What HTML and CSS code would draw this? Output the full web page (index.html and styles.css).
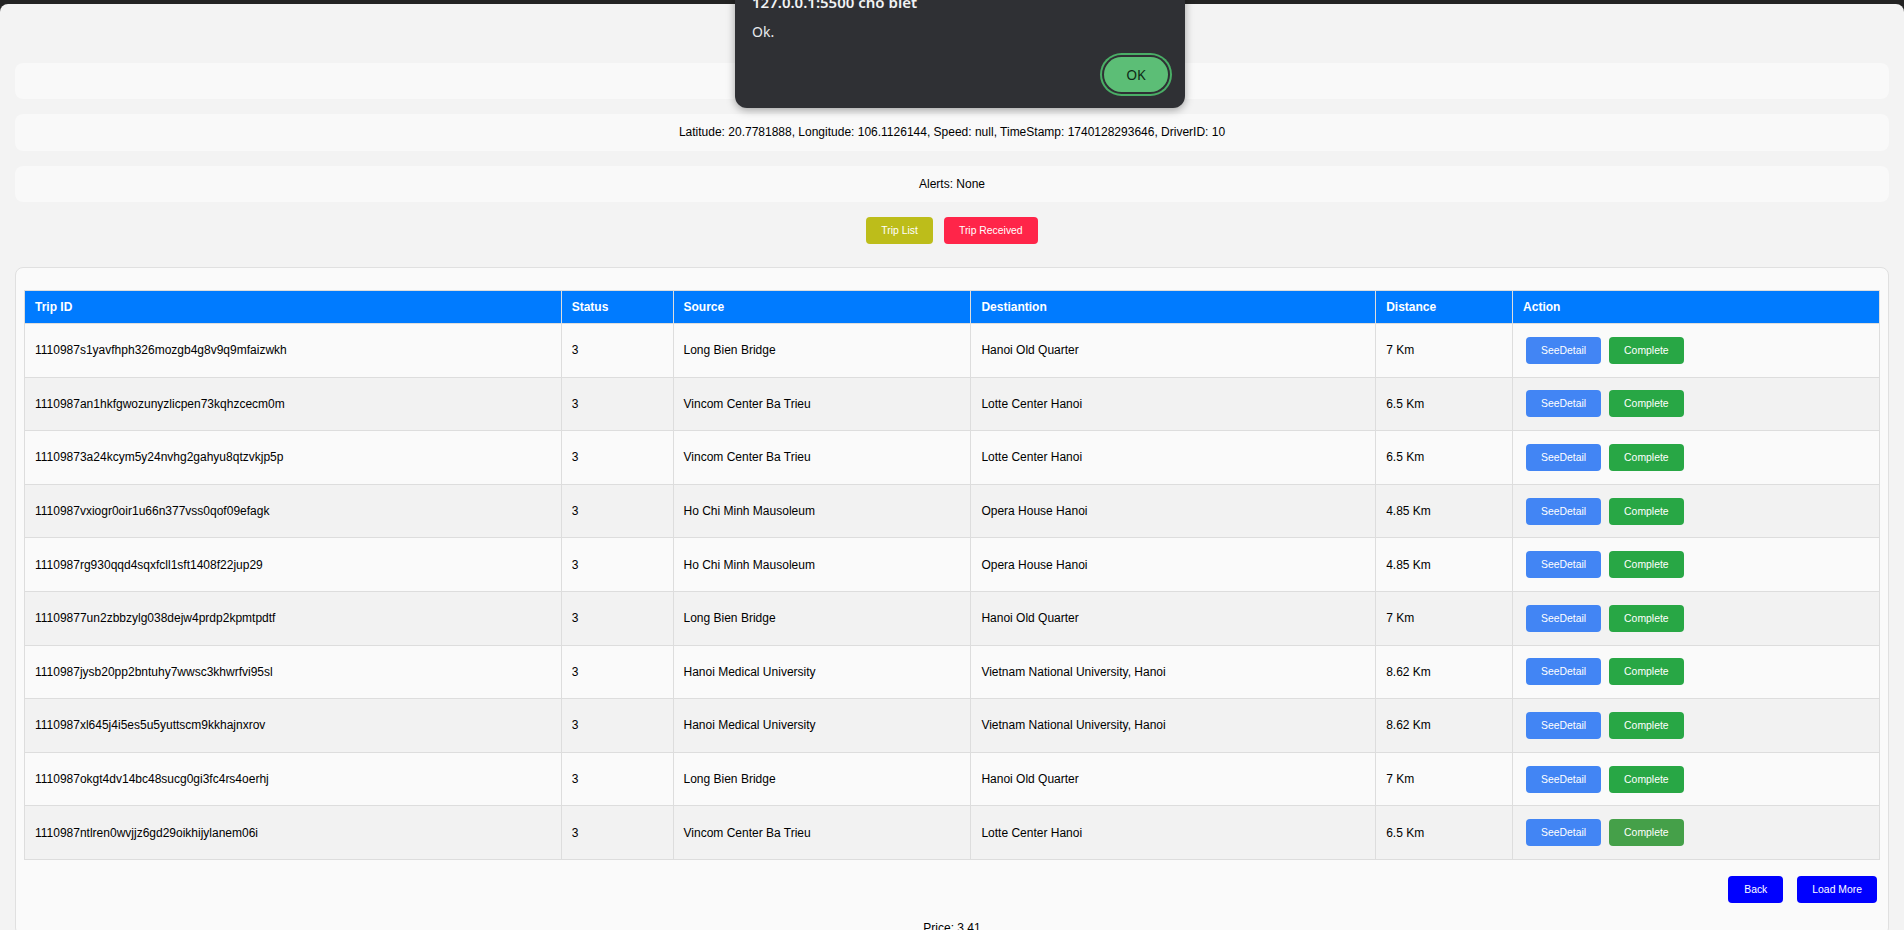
FILE: index.html
```html
<!DOCTYPE html>
<html lang="vi">
<head>
<meta charset="utf-8">
<title>Driver Trips</title>
<link rel="stylesheet" href="styles.css">
</head>
<body>
<div class="viewport">
  <main class="page">
    <div class="info-box"></div>
    <div class="info-box info-tall">Latitude: 20.7781888, Longitude: 106.1126144, Speed: null, TimeStamp: 1740128293646, DriverID: 10</div>
    <div class="info-box">Alerts: None</div>
    <div class="tabs">
      <button class="btn btn-olive">Trip List</button>
      <button class="btn btn-red">Trip Received</button>
    </div>
    <section class="card">
      <table class="trips">
        <colgroup>
          <col class="w-id"><col class="w-status"><col class="w-src"><col class="w-dst"><col class="w-dist"><col class="w-act">
        </colgroup>
        <thead>
          <tr><th>Trip ID</th><th>Status</th><th>Source</th><th>Destiantion</th><th>Distance</th><th>Action</th></tr>
        </thead>
        <tbody>
          <tr><td>1110987s1yavfhph326mozgb4g8v9q9mfaizwkh</td><td>3</td><td>Long Bien Bridge</td><td>Hanoi Old Quarter</td><td>7 Km</td><td><div class="actions"><button class="btn btn-see">SeeDetail</button><button class="btn btn-done">Complete</button></div></td></tr>
          <tr><td>1110987an1hkfgwozunyzlicpen73kqhzcecm0m</td><td>3</td><td>Vincom Center Ba Trieu</td><td>Lotte Center Hanoi</td><td>6.5 Km</td><td><div class="actions"><button class="btn btn-see">SeeDetail</button><button class="btn btn-done">Complete</button></div></td></tr>
          <tr><td>11109873a24kcym5y24nvhg2gahyu8qtzvkjp5p</td><td>3</td><td>Vincom Center Ba Trieu</td><td>Lotte Center Hanoi</td><td>6.5 Km</td><td><div class="actions"><button class="btn btn-see">SeeDetail</button><button class="btn btn-done">Complete</button></div></td></tr>
          <tr><td>1110987vxiogr0oir1u66n377vss0qof09efagk</td><td>3</td><td>Ho Chi Minh Mausoleum</td><td>Opera House Hanoi</td><td>4.85 Km</td><td><div class="actions"><button class="btn btn-see">SeeDetail</button><button class="btn btn-done">Complete</button></div></td></tr>
          <tr><td>1110987rg930qqd4sqxfcll1sft1408f22jup29</td><td>3</td><td>Ho Chi Minh Mausoleum</td><td>Opera House Hanoi</td><td>4.85 Km</td><td><div class="actions"><button class="btn btn-see">SeeDetail</button><button class="btn btn-done">Complete</button></div></td></tr>
          <tr><td>11109877un2zbbzylg038dejw4prdp2kpmtpdtf</td><td>3</td><td>Long Bien Bridge</td><td>Hanoi Old Quarter</td><td>7 Km</td><td><div class="actions"><button class="btn btn-see">SeeDetail</button><button class="btn btn-done">Complete</button></div></td></tr>
          <tr><td>1110987jysb20pp2bntuhy7wwsc3khwrfvi95sl</td><td>3</td><td>Hanoi Medical University</td><td>Vietnam National University, Hanoi</td><td>8.62 Km</td><td><div class="actions"><button class="btn btn-see">SeeDetail</button><button class="btn btn-done">Complete</button></div></td></tr>
          <tr><td>1110987xl645j4i5es5u5yuttscm9kkhajnxrov</td><td>3</td><td>Hanoi Medical University</td><td>Vietnam National University, Hanoi</td><td>8.62 Km</td><td><div class="actions"><button class="btn btn-see">SeeDetail</button><button class="btn btn-done">Complete</button></div></td></tr>
          <tr><td>1110987okgt4dv14bc48sucg0gi3fc4rs4oerhj</td><td>3</td><td>Long Bien Bridge</td><td>Hanoi Old Quarter</td><td>7 Km</td><td><div class="actions"><button class="btn btn-see">SeeDetail</button><button class="btn btn-done">Complete</button></div></td></tr>
          <tr><td>1110987ntlren0wvjjz6gd29oikhijylanem06i</td><td>3</td><td>Vincom Center Ba Trieu</td><td>Lotte Center Hanoi</td><td>6.5 Km</td><td><div class="actions"><button class="btn btn-see">SeeDetail</button><button class="btn btn-done btn-done-hover">Complete</button></div></td></tr>
        </tbody>
      </table>
      <div class="pager">
        <button class="btn btn-blue btn-back">Back</button>
        <button class="btn btn-blue">Load More</button>
      </div>
      <div class="price">Price: 3.41</div>
    </section>
  </main>
</div>

<div class="dialog" role="alertdialog">
  <div class="dialog-title">127.0.0.1:5500 cho biết</div>
  <div class="dialog-msg">Ok.</div>
  <div class="dialog-actions">
    <button class="dialog-ok">OK</button>
  </div>
</div>
</body>
</html>
```

FILE: styles.css
```css
html, body {
  margin: 0;
  height: 100%;
}

body {
  position: relative;
  background: #232323;
  font-family: "Liberation Sans", Arial, sans-serif;
  font-size: 12px;
  color: #000;
  overflow: hidden;
}

.viewport {
  margin-top: 4px;
  height: calc(100vh - 4px);
  background: #f3f3f3;
  border-radius: 8px 8px 0 0;
  overflow: hidden;
}

.page {
  padding: 59px 15px 0;
}

.info-box {
  background: #f9f9f9;
  border-radius: 8px;
  padding: 11px 10px;
  line-height: 14px;
  min-height: 14px;
  text-align: center;
  margin-bottom: 15px;
}

.info-tall {
  padding-bottom: 12px;
}

.tabs {
  display: flex;
  justify-content: center;
  gap: 11px;
  margin-bottom: 23px;
}

.btn {
  font-family: "Liberation Sans", Arial, sans-serif;
  font-size: 10.4px;
  line-height: 13px;
  padding: 7px 15px;
  border: 0;
  border-radius: 4px;
  color: #fff;
  cursor: pointer;
}

.btn-olive { background: #bdbd1a; }
.btn-red { background: #ff2549; }
.btn-see { background: #4285f4; }
.btn-done { background: #28a745; }
.btn-done-hover { background: #45a049; }
.btn-blue { background: #0000ff; }
.btn-back { padding-left: 16px; padding-right: 16px; }

.card {
  background: #fafafa;
  border: 1px solid #e0e0e0;
  border-radius: 8px;
  padding: 22px 8px 0;
}

.trips {
  width: 100%;
  border-collapse: collapse;
  table-layout: fixed;
}

.w-id { width: 28.93%; }
.w-status { width: 6.03%; }
.w-src { width: 16.06%; }
.w-dst { width: 21.82%; }
.w-dist { width: 7.38%; }
.w-act { width: 19.78%; }

.trips th {
  background: #007bff;
  color: #fff;
  font-weight: bold;
  text-align: left;
  padding: 10px;
  line-height: 12px;
  border: 1px solid #ddd;
}

.trips td {
  padding: 10px;
  line-height: 14px;
  border: 1px solid #ddd;
  vertical-align: middle;
}

.trips tbody tr:nth-child(even) {
  background: #f2f2f2;
}

.actions {
  display: flex;
  gap: 8px;
  padding: 2.8px 3px;
}

.pager {
  display: flex;
  justify-content: flex-end;
  gap: 14px;
  padding-right: 3px;
  margin-top: 16px;
}

.price {
  text-align: center;
  margin-top: 18px;
  line-height: 14px;
}

.dialog {
  position: absolute;
  left: 735px;
  top: -28px;
  width: 416px;
  padding: 20px 17px 16px 17px;
  background: #2f3034;
  border-radius: 12px;
  box-shadow: 0 2px 8px rgba(0, 0, 0, 0.35);
  color: #e8eaed;
  font-family: "Noto Sans", "Open Sans", sans-serif;
}

.dialog-title {
  font-size: 15px;
  font-weight: 600;
  line-height: 20px;
  color: #f1f3f4;
}

.dialog-msg {
  margin-top: 10px;
  font-size: 14px;
  line-height: 20px;
}

.dialog-actions {
  display: flex;
  justify-content: flex-end;
  margin-top: 15px;
}

.dialog-ok {
  width: 64px;
  height: 35px;
  border: 0;
  border-radius: 18px;
  background: #5cbe76;
  color: #0f2b17;
  font-family: "Noto Sans", "Open Sans", sans-serif;
  font-size: 14px;
  box-shadow: 0 0 0 2px #2f3034, 0 0 0 4px #4aae66;
}
```
